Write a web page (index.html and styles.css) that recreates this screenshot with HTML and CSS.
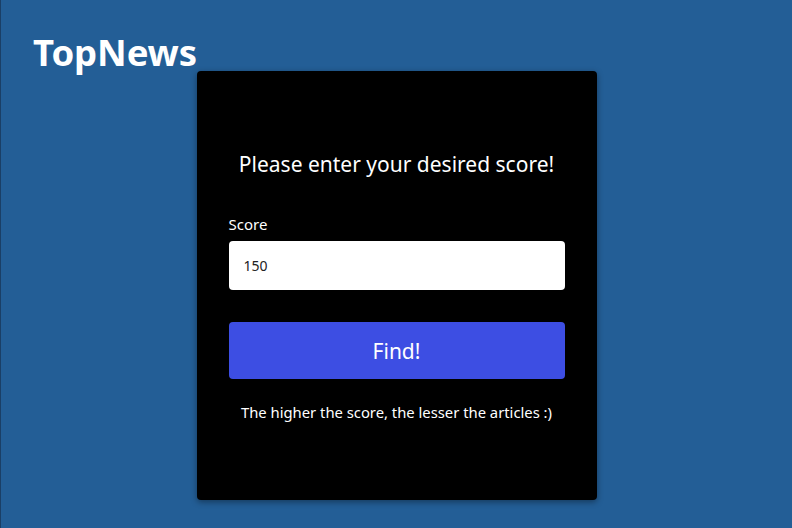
FILE: index.html
```html
<!DOCTYPE html>
<html>
<head>
<meta charset="utf-8">
<link rel="stylesheet" href="styles.css">
</head>
<body>
<header class="header"><h1 class="logo">TopNews</h1></header>
<main class="card">
  <h2 class="title">Please enter your desired score!</h2>
  <label class="label" for="score">Score</label>
  <input class="input" id="score" type="text" value="150">
  <button class="btn" type="button">Find!</button>
  <p class="hint">The higher the score, the lesser the articles :)</p>
</main>
</body>
</html>
```
FILE: styles.css
```css
html, body { margin: 0; padding: 0; }
body {
  background: #235e96;
  font-family: "Noto Sans", "Open Sans", sans-serif;
  color: #fff;
  height: 528px;
  overflow: hidden;
  border-left: 1px solid #1a3f66;
  box-sizing: border-box;
}
.header { height: 71px; padding-left: 32px; box-sizing: border-box; }
.logo {
  margin: 0;
  padding-top: 30px;
  font-size: 36.5px;
  line-height: 44px;
  font-weight: 700;
  letter-spacing: -0.1px;
}
.card {
  width: 400px;
  height: 429px;
  margin: 0 auto;
  background: #000;
  border-radius: 4px;
  box-shadow: 0 2px 6px rgba(0,0,0,0.4);
  box-sizing: border-box;
  padding: 0 32px;
  display: flex;
  flex-direction: column;
}
.title {
  margin: 78px 0 0;
  font-size: 21px;
  font-weight: 400;
  line-height: 30px;
  text-align: center;
}
.label {
  margin-top: 35px;
  font-size: 15px;
  line-height: 20px;
}
.input {
  margin-top: 7px;
  height: 49px;
  border: none;
  border-radius: 4px;
  background: #fff;
  padding: 0 15px;
  font-family: inherit;
  font-size: 14px;
  color: #222;
  box-sizing: border-box;
  outline: none;
}
.btn {
  margin-top: 32px;
  height: 57px;
  border: none;
  border-radius: 4px;
  background: #3d4ee3;
  color: #fff;
  font-family: inherit;
  font-size: 21px;
}
.hint {
  margin: 22px 0 0;
  font-size: 14.8px;
  line-height: 22px;
  text-align: center;
}
```
